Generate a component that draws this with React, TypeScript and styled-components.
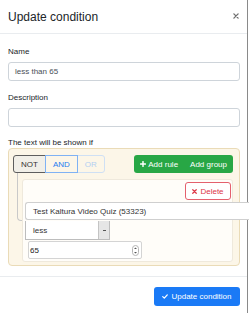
import React from 'react';
import styled, { createGlobalStyle } from 'styled-components';

const Global = createGlobalStyle`
  html, body { margin: 0; padding: 0; background: #fff; overflow: hidden; }
  body { font-family: "Liberation Sans", Arial, Helvetica, sans-serif; color: #212529; }
  * { box-sizing: border-box; }
`;

const Modal = styled.div`
  width: 248px;
  height: 313px;
  border-right: 1px solid #8a8a8a;
  background: #fff;
  display: flex;
  flex-direction: column;
`;

const Header = styled.div`
  height: 34px;
  flex: none;
  border-bottom: 1px solid #e9ecef;
  display: flex;
  align-items: center;
  justify-content: space-between;
  padding: 0 8px 0 8px;
`;

const Title = styled.h5`
  margin: 0;
  font-size: 12px;
  font-weight: 400;
  line-height: 14px;
  color: #212529;
`;

const Close = styled.span`
  display: flex;
  width: 6px;
  height: 6px;
  margin-top: -2px;
`;

const Body = styled.div`
  padding: 13px 7px 10px 8px;
  display: flex;
  flex-direction: column;
  flex: none;
`;

const FormGroup = styled.div<{ $mb?: number }>`
  display: flex;
  flex-direction: column;
  margin-bottom: ${(p) => p.$mb ?? 12}px;
`;

const Label = styled.label<{ $mb?: number }>`
  display: block;
  font-size: 8px;
  line-height: 10px;
  margin-bottom: ${(p) => p.$mb ?? 5}px;
  color: #212529;
`;

const TextInput = styled.div`
  height: 19px;
  border: 1px solid #ced4da;
  border-radius: 3px;
  padding: 0 6px;
  font-size: 8px;
  display: flex;
  align-items: center;
  color: #495057;
  background: #fff;
`;

const QueryGroup = styled.div`
  border: 1px solid #eadbb7;
  background: #fcf6e8;
  border-radius: 4px;
  padding: 6px 6px 3px 4px;
`;

const GroupHeader = styled.div`
  display: flex;
  justify-content: space-between;
  height: 18px;
`;

const Combinators = styled.div`
  display: flex;
`;

const CombButton = styled.div<{ $kind: 'not' | 'on' | 'off' }>`
  height: 18px;
  padding: 0 7px;
  font-size: 8px;
  display: flex;
  align-items: center;
  border: 1px solid
    ${(p) => (p.$kind === 'not' ? '#5e5e5e' : p.$kind === 'on' ? '#7fb2f4' : '#cfe0f4')};
  margin-left: ${(p) => (p.$kind === 'not' ? 0 : -1)}px;
  background: ${(p) => (p.$kind === 'not' ? '#f1efe8' : '#fcf6e8')};
  color: ${(p) => (p.$kind === 'not' ? '#333' : p.$kind === 'on' ? '#1f7bf0' : '#b2cff2')};
  border-radius: ${(p) => (p.$kind === 'not' ? '3px 0 0 3px' : p.$kind === 'off' ? '0 3px 3px 0' : '0')};
  z-index: ${(p) => (p.$kind === 'off' ? 0 : 1)};
`;

const Actions = styled.div`
  display: flex;
  background: #28a745;
  border-radius: 3px;
  height: 18px;
`;

const GreenButton = styled.div`
  display: flex;
  align-items: center;
  gap: 2px;
  padding: 0 6px;
  color: #fff;
  font-size: 8px;
`;

const Rules = styled.div`
  position: relative;
  margin-top: 6px;
  padding-left: 9px;
  &::before {
    content: '';
    position: absolute;
    left: 4px;
    top: -6px;
    width: 6px;
    height: 47px;
    border-left: 1px solid #c9c9c9;
    border-bottom: 1px solid #c9c9c9;
    border-bottom-left-radius: 4px;
  }
`;

const RuleBox = styled.div`
  position: relative;
  background: #fffdf9;
  border: 1px solid #efe9dc;
  border-radius: 3px;
  padding: 2px 0 2px 2px;
  display: flex;
  flex-direction: column;
  align-items: flex-start;
`;

const DeleteButton = styled.div`
  align-self: flex-end;
  margin-right: 1px;
  height: 18px;
  width: 46px;
  border: 1px solid #e4606d;
  border-radius: 3px;
  background: #fff;
  color: #dc3545;
  font-size: 8px;
  display: flex;
  align-items: center;
  justify-content: center;
  gap: 3px;
`;

const FieldSelect = styled.div`
  margin-top: 2px;
  width: 232px;
  height: 18px;
  border: 1px solid #cfcfcf;
  border-right: none;
  border-radius: 3px 0 0 3px;
  background: #fff;
  font-size: 8px;
  display: flex;
  align-items: center;
  padding-left: 7px;
  color: #333;
  margin-right: -30px;
`;

const OpSelect = styled.div`
  margin-top: 1px;
  width: 85px;
  height: 19px;
  border: 1px solid #bdbdbd;
  border-top: none;
  background: #fff;
  font-size: 8px;
  display: flex;
  align-items: stretch;
  color: #333;
`;

const OpText = styled.span`
  flex: 1;
  display: flex;
  align-items: center;
  padding-left: 7px;
`;

const OpArrow = styled.span`
  width: 11px;
  background: #e6e6e6;
  border-left: 1px solid #c4c4c4;
  display: flex;
  align-items: center;
  justify-content: center;
  &::after {
    content: '';
    width: 3px;
    height: 1px;
    background: #555;
  }
`;

const NumberInput = styled.div`
  margin: 1px 0 0 3px;
  width: 114px;
  height: 18px;
  border: 1px solid #d4d4d4;
  border-radius: 2px;
  background: #fff;
  font-size: 8px;
  display: flex;
  align-items: center;
  justify-content: space-between;
  padding: 0 2px 0 1px;
  color: #222;
`;

const Footer = styled.div`
  flex: none;
  border-top: 1px solid #e9ecef;
  padding: 10px 7px 7px;
  display: flex;
  justify-content: flex-end;
`;

const PrimaryButton = styled.div`
  width: 86px;
  height: 19px;
  background: #1a7af6;
  border-radius: 3px;
  color: #fff;
  font-size: 8px;
  display: flex;
  align-items: center;
  justify-content: center;
  gap: 3px;
`;

const XIcon = ({ size, color, w }: { size: number; color: string; w: number }) => (
  <svg width={size} height={size} viewBox="0 0 10 10">
    <path d="M1.5 1.5 L8.5 8.5 M8.5 1.5 L1.5 8.5" stroke={color} strokeWidth={w} strokeLinecap="round" />
  </svg>
);

const PlusIcon = () => (
  <svg width="6" height="6" viewBox="0 0 10 10">
    <path d="M5 1 V9 M1 5 H9" stroke="#fff" strokeWidth="2.4" strokeLinecap="round" />
  </svg>
);

const CheckIcon = () => (
  <svg width="6" height="5" viewBox="0 0 12 10">
    <path d="M1.5 5.2 L4.6 8.2 L10.5 1.8" stroke="#fff" strokeWidth="2.6" fill="none" strokeLinecap="round" strokeLinejoin="round" />
  </svg>
);

const Spinner = () => (
  <svg width="7" height="11" viewBox="0 0 7 11">
    <rect x="0.5" y="0.5" width="6" height="10" rx="3" fill="#fff" stroke="#b5b5b5" />
    <path d="M2 4 L3.5 2.5 L5 4 Z M2 7 L3.5 8.5 L5 7 Z" fill="#555" />
  </svg>
);

export default function App() {
  return (
    <>
      <Global />
      <Modal>
        <Header>
          <Title>Update condition</Title>
          <Close>
            <XIcon size={6} color="#6f6f6f" w={2.2} />
          </Close>
        </Header>
        <Body>
          <FormGroup>
            <Label>Name</Label>
            <TextInput>less than 65</TextInput>
          </FormGroup>
          <FormGroup $mb={11}>
            <Label>Description</Label>
            <TextInput />
          </FormGroup>
          <FormGroup $mb={0}>
            <Label $mb={0}>The text will be shown if</Label>
            <QueryGroup>
              <GroupHeader>
                <Combinators>
                  <CombButton $kind="not">NOT</CombButton>
                  <CombButton $kind="on">AND</CombButton>
                  <CombButton $kind="off">OR</CombButton>
                </Combinators>
                <Actions>
                  <GreenButton>
                    <PlusIcon />
                    Add rule
                  </GreenButton>
                  <GreenButton>Add group</GreenButton>
                </Actions>
              </GroupHeader>
              <Rules>
                <RuleBox>
                  <DeleteButton>
                    <XIcon size={5} color="#dc3545" w={2.4} />
                    Delete
                  </DeleteButton>
                  <FieldSelect>Test Kaltura Video Quiz (53323)</FieldSelect>
                  <OpSelect>
                    <OpText>less</OpText>
                    <OpArrow />
                  </OpSelect>
                  <NumberInput>
                    <span>65</span>
                    <Spinner />
                  </NumberInput>
                </RuleBox>
              </Rules>
            </QueryGroup>
          </FormGroup>
        </Body>
        <Footer>
          <PrimaryButton>
            <CheckIcon />
            Update condition
          </PrimaryButton>
        </Footer>
      </Modal>
    </>
  );
}
